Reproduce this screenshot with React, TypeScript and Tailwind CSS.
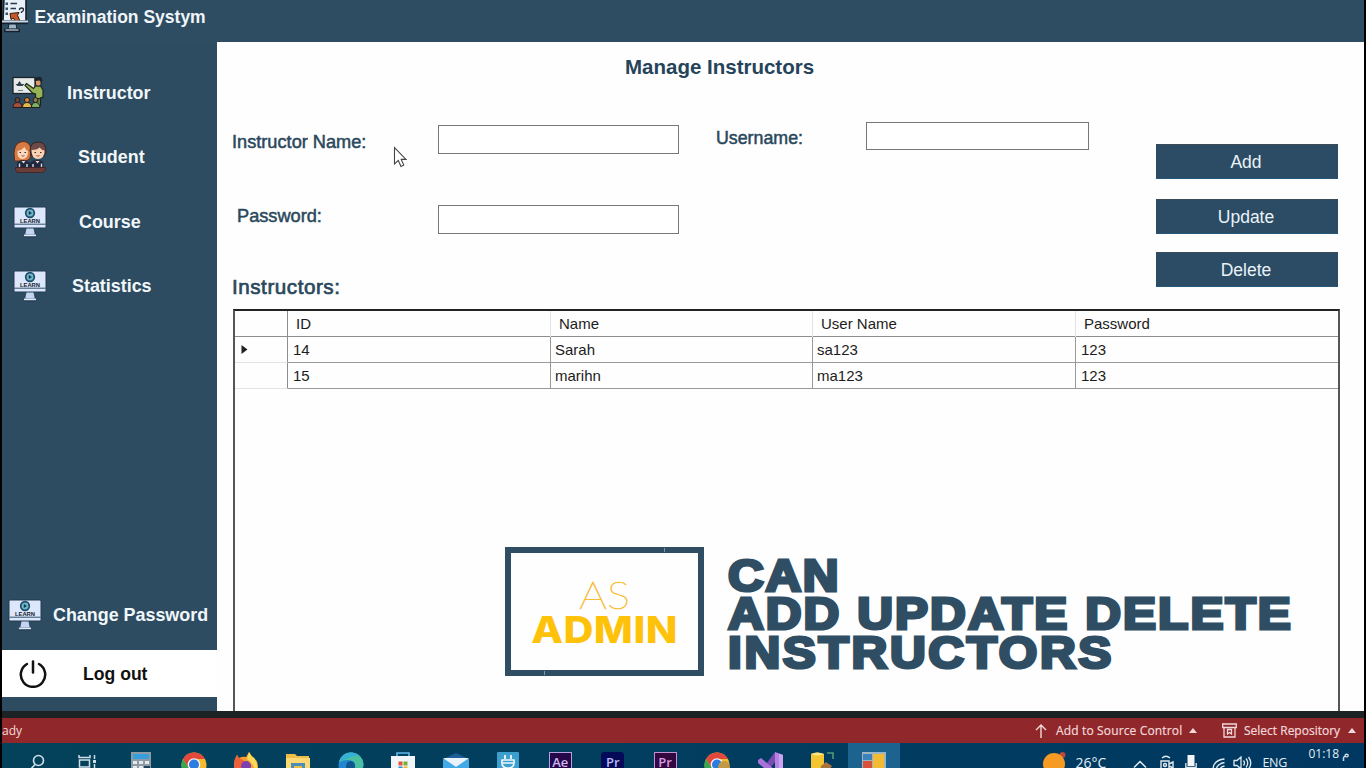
import React from "react";

function ExamIcon() {
  return (
    <svg width="26" height="34" viewBox="0 0 26 34" className="block">
      <path d="M2 0H24V22H1Z" fill="#e9f1f8" stroke="#15212c" strokeWidth="1.6" />
      <path d="M3.500 3.500h2.500v2.500H3.500ZM3.500 8.500h2.500v2.500H3.500ZM3.500 13.500h2.500v2.500H3.500Z" fill="#3b5164" />
      <path d="M8.500 4.500H15M8.500 9.500H14" stroke="#27394a" strokeWidth="1.300" />
      <path d="M17.500 11q0-2 2-2t2 1.700q0 1.300-2 2.300v1" stroke="#1c2935" strokeWidth="1.300" fill="none" />
      <path d="M8 14.500L17 13.500l-1.500 2.800 2.500 5.700h-5l-1.500-3-2.500 1.500Z" fill="#c4592c" stroke="#3a1a10" strokeWidth="1" />
      <path d="M0 22.500H26" stroke="#c8d8e6" strokeWidth="2" />
      <path d="M0 24.500H26" stroke="#15212c" strokeWidth="1.400" />
      <path d="M7 25h7l1 5H6Z" fill="#9fb6c8" stroke="#15212c" strokeWidth="1" />
      <path d="M2 31.500H18" stroke="#15212c" strokeWidth="3.400" />
      <path d="M3.500 31H16.500" stroke="#b9cbd9" strokeWidth="1.300" />
    </svg>
  );
}

function TeacherIcon() {
  return (
    <svg width="32" height="34" viewBox="0 0 32 34" className="block">
      <rect x="1" y="1.500" width="22" height="16" fill="#e6ebe9" stroke="#1c2429" strokeWidth="1.300" />
      <path d="M3.500 8h2l2-3 2 3h3l-2 2h-5Z" fill="#33414a" />
      <path d="M6 14.500h5" stroke="#6c7b82" strokeWidth="1" />
      <path d="M14.500 7.500l7 5 2-2.500h5l2.500 4v7l-2.500 1v7h-5v-11l-3-1-7.500-7.500Z" fill="#98b356" stroke="#1b2518" strokeWidth="1.200" />
      <rect x="23.500" y="3.500" width="5.500" height="6.500" rx="2" fill="#d99a69" stroke="#1c2429" strokeWidth="1" />
      <path d="M22.500 5V2.500Q25 0 29 1l1.500 3-1 3-1.500-2.500Z" fill="#1c2429" />
      <path d="M23.500 22.500h5v7h-5Z" fill="#5d7f4e" stroke="#1b2518" />
      <path d="M1 31.500q0-5 4.500-5t4.500 5Z" fill="#a6503b" stroke="#241c1a" />
      <circle cx="5.500" cy="24" r="2.500" fill="#614542" stroke="#231b1b" />
      <path d="M10.500 31.500q0-5 4.500-5t4.500 5Z" fill="#e3b94c" stroke="#241c1a" />
      <circle cx="15" cy="24" r="2.500" fill="#d6843c" stroke="#231b1b" />
      <path d="M19.500 31.500q0-5 4-5t4.500 5Z" fill="#7fae66" stroke="#241c1a" />
      <circle cx="23.500" cy="24" r="2.500" fill="#8e7b44" stroke="#231b1b" />
    </svg>
  );
}

function StudentsIcon() {
  return (
    <svg width="34" height="34" viewBox="0 0 34 34" className="block">
      <path d="M1.500 20Q-1 3 9 1.500q8-.5 9 8l-1 9q-3 3-6 2.500L2 21Z" fill="#d97a42" stroke="#5a2a1c" strokeWidth="1" />
      <path d="M17 11q0-9 8.500-9 8 0 7.500 11l-2 3H19Z" fill="#6e4a46" stroke="#35211f" strokeWidth="1" />
      <path d="M4.500 11q4-.5 7-4 1 3 3.500 4 0 8-5.500 8t-5-8Z" fill="#fbd9bd" />
      <path d="M18.500 10q6 0 8-2.500 2 2.500 5 3 0 8.500-6.500 8.500t-6.500-9Z" fill="#f9d2b4" />
      <path d="M6.500 12.500h1.500M11.500 12.500H13M21.500 12.500H23M27 12.500h1.500" stroke="#3a2522" strokeWidth="1.200" />
      <path d="M8.500 15.500q1.500 1.500 3 0M23.500 15.500q1.500 1.500 3 0" stroke="#b3473b" strokeWidth="1" fill="none" />
      <path d="M4 28v-5q2-3 6-3t7 3q2-3 7.500-3 6 0 6 4v4Z" fill="#20283e" />
      <path d="M6.500 23.500v3.500M14 24v3M20 24v3M28.500 23.500v3.500" stroke="#d3dcf1" strokeWidth="1.400" />
      <path d="M8.500 21l2 2.500 2-2.500M22.500 21l2 2.500 2-2.500" fill="#f4d6c3" />
      <path d="M2.500 27.500h30v2.500l-2 2.500H4l-1.500-2.500Z" fill="#6a3c38" stroke="#40211f" strokeWidth=".8" />
    </svg>
  );
}

function LearnIcon() {
  return (
    <svg width="34" height="32" viewBox="0 0 34 32" className="block">
      <rect x="1" y="1" width="32" height="21" rx="1.500" fill="#dce7fb" stroke="#243a50" strokeWidth="1" />
      <path d="M1.500 18.200H32.500" stroke="#33506b" strokeWidth="1" />
      <circle cx="17" cy="7" r="4.300" fill="#6eb4cc" stroke="#1d4c66" strokeWidth="1.700" />
      <path d="M15.800 5v4l3-2Z" fill="#143348" />
      <text x="17" y="17" textAnchor="middle" fontFamily="Liberation Sans" fontWeight="700" fontSize="5.800" fill="#16202c">LEARN</text>
      <path d="M13.500 22.500h7l1.200 6H12.300Z" fill="#c4d4f2" />
      <path d="M11 29.500H23" stroke="#e2ebfc" strokeWidth="1.800" />
      <path d="M11 31H23" stroke="#243a50" strokeWidth="1" />
    </svg>
  );
}

function NavItem({ icon, label, pad, gap }: { icon: React.ReactNode; label: string; pad: string; gap: string }) {
  return (
    <div className={`flex h-[64.3px] items-center ${pad}`}>
      <div className="w-[34px] shrink-0">{icon}</div>
      <span className={`text-[17.9px] leading-6 font-bold whitespace-nowrap text-[#f2f7fa] ${gap}`}>{label}</span>
    </div>
  );
}

const rows = [
  { id: "14", name: "Sarah", user: "sa123", pass: "123", current: true },
  { id: "15", name: "marihn", user: "ma123", pass: "123", current: false },
];

function ActionButton({ label, className }: { label: string; className: string }) {
  return (
    <button className={`block w-[182px] border-t border-b border-t-[#3c4b58] border-b-[#24557a] bg-[#2b4c64] pt-[2px] pr-[2px] text-center text-[17.5px] leading-none text-[#eaf2f7] ${className}`}>
      {label}
    </button>
  );
}

function Chrome() {
  return (
    <svg width="26" height="26" viewBox="0 0 26 26">
      <circle cx="13" cy="13" r="12.500" fill="#f4b92d" />
      <path d="M13 .5A12.500 12.500 0 0 1 24 7H13l-5.500 9L2 7A12.500 12.500 0 0 1 13 .5Z" fill="#e2483b" />
      <path d="M2 7l6 9.500 7 2-3 7A12.500 12.500 0 0 1 2 7Z" fill="#36a853" />
      <circle cx="13" cy="12.500" r="6.300" fill="#f3f6fb" />
      <circle cx="13" cy="12.500" r="5" fill="#2c7de0" />
    </svg>
  );
}

function AdobeTile({ text, box }: { text: string; box: string }) {
  return (
    <div className={`flex h-[24px] w-[23px] justify-center border pt-[3px] text-[13px] leading-[13px] font-semibold ${box}`}>
      {text}
    </div>
  );
}

const apps: { key: string; icon: React.ReactNode }[] = [
  {
    key: "calculator",
    icon: (
      <svg width="20" height="26" viewBox="0 0 20 26">
        <path d="M0 0h20v26H0Z" fill="#8e9ba5" />
        <path d="M2 2h16v5H2Z" fill="#35a0dd" />
        <path d="M2 9h4v3H2ZM8 9h4v3H8ZM14 9h4v3h-4ZM2 14h4v3H2ZM8 14h4v3H8Z" fill="#e3e9ed" />
        <path d="M13 14h6v10h-6Z" fill="#1f405a" />
      </svg>
    ),
  },
  { key: "chrome", icon: <Chrome /> },
  {
    key: "firefox",
    icon: (
      <svg width="26" height="26" viewBox="0 0 26 26">
        <path d="M1 14Q1 7 4 3l2 3q4-2 7-1l3-5q2 4 5 6 4 3 4 9 0 11-12 11T1 14Z" fill="#f5a02d" />
        <path d="M1 14Q1 7 4 3l2 3q4 1 7 5H9l-1 4 6 9Q1 26 1 14Z" fill="#ee6038" />
        <circle cx="13" cy="14" r="5" fill="#7b3fb0" />
        <path d="M16 0q2 4 5 6 5 6 2 14-3-9-9-13Z" fill="#fbd95c" />
      </svg>
    ),
  },
  {
    key: "files",
    icon: (
      <svg width="24" height="24" viewBox="0 0 24 24">
        <path d="M0 2h9l2 2h12v20H0Z" fill="#edbd48" />
        <path d="M0 6h24v18H0Z" fill="#fbd974" />
        <path d="M5 11h14v13H5Z" fill="#4b8fb8" />
        <path d="M8 14h8v10H8Z" fill="#edbd48" />
      </svg>
    ),
  },
  {
    key: "edge",
    icon: (
      <svg width="26" height="26" viewBox="0 0 26 26">
        <circle cx="13" cy="13" r="12.500" fill="#2386d1" />
        <path d="M1 10Q4 0 14 .5 25 2 25.500 13q-1 6-9 5 3-9-6-10-6 0-9.500 2Z" fill="#49c0a0" />
        <path d="M1 10Q4 0 14 .5q5 .5 8 4-6-2-12 2-6 1-9 3.500Z" fill="#35b0d6" />
        <path d="M8 15q0-6 5-6 4 1 4 5-1 5 5 5l-3 6Q8 25 8 15Z" fill="#10568f" />
      </svg>
    ),
  },
  {
    key: "store",
    icon: (
      <svg width="26" height="25" viewBox="0 0 26 25">
        <path d="M7 5V1h12v4" fill="none" stroke="#5fb7ea" strokeWidth="1.600" />
        <path d="M1 4h24v21H1Z" fill="#f0f5f9" />
        <path d="M8.500 9.500h4v4h-4Z" fill="#e05438" />
        <path d="M13.500 9.500h4v4h-4Z" fill="#77ad38" />
        <path d="M8.500 14.500h4v4h-4Z" fill="#2c8fd3" />
        <path d="M13.500 14.500h4v4h-4Z" fill="#efb52e" />
      </svg>
    ),
  },
  {
    key: "mail",
    icon: (
      <svg width="26" height="24" viewBox="0 0 26 24">
        <path d="M0 7l13-6 13 6Z" fill="#1c5f9a" />
        <path d="M0 7h26v17H0Z" fill="#42a8e6" />
        <path d="M0 6h26l-13 9Z" fill="#eaf3fa" />
      </svg>
    ),
  },
  {
    key: "plug",
    icon: (
      <svg width="22" height="24" viewBox="0 0 22 24">
        <rect width="22" height="24" rx="1" fill="#3d9fce" />
        <path d="M8 3v4M14 3v4" stroke="#eef7fb" strokeWidth="1.800" />
        <path d="M5 8h12v3q0 5-6 5t-6-5Z" fill="none" stroke="#eef7fb" strokeWidth="1.700" />
        <path d="M11 16v6M6 11h10" stroke="#eef7fb" strokeWidth="1.600" />
      </svg>
    ),
  },
  { key: "ae", icon: <AdobeTile text="Ae" box="border-[#b3a2dc] bg-[#26074a] text-[#cdb8f0]" /> },
  { key: "pr-blue", icon: <AdobeTile text="Pr" box="rounded-[3px] border-[#040a57] bg-[#040a57] text-[#b9b6fa]" /> },
  { key: "pr-plum", icon: <AdobeTile text="Pr" box="border-[#c58fd3] bg-[#33083f] text-[#d79be2]" /> },
  {
    key: "chrome-profile",
    icon: (
      <div className="relative">
        <Chrome />
        <svg className="absolute top-[8px] left-[14px]" width="12" height="12" viewBox="0 0 12 12">
          <path d="M0 7q1-6 6-6t6 6v5H2Z" fill="#c29a45" />
          <path d="M5 8h7v4H5Z" fill="#41597a" />
        </svg>
      </div>
    ),
  },
  {
    key: "visual-studio",
    icon: (
      <svg width="26" height="25" viewBox="0 0 26 25">
        <path d="M18 0v10L6 25H0l1-2Z" fill="#7c4cb4" />
        <path d="M1 8l3-2 14 12v7L1 11Z" fill="#a972db" />
        <path d="M18 0l8 3v22h-8Z" fill="#b583e2" />
        <path d="M22 1.500l4 1.500v22h-4Z" fill="#cda3f0" />
      </svg>
    ),
  },
  {
    key: "sql",
    icon: (
      <svg width="24" height="24" viewBox="0 0 24 24">
        <path d="M1 2q6-3 13 0v15H1Z" fill="#f2c531" />
        <path d="M1 2q6-3 13 0-6 3-13 0" fill="#fbe58a" />
        <path d="M17 1h6v6" fill="none" stroke="#4f9c74" strokeWidth="1.600" />
        <path d="M11 14l5-4 6 4-4 6-8-1Z" fill="#a7753b" />
      </svg>
    ),
  },
];

function FormLabel({ text, className }: { text: string; className: string }) {
  return <div className={`leading-5 whitespace-nowrap text-[#2a485c] ${className}`}>{text}</div>;
}

export default function App() {
  return (
    <div className="flex h-[768px] w-[1366px] flex-col overflow-hidden bg-black px-[2px] font-['Liberation_Sans',Arial,sans-serif]">
      <header className="flex h-[42px] shrink-0 bg-[#2e4c62]">
        <div className="-mt-[1px] w-[26px]">
          <ExamIcon />
        </div>
        <h1 className="mt-[5px] ml-[6.500px] text-[17.5px] leading-6 font-bold text-[#eff5f9]">Examination Systym</h1>
      </header>

      <div className="flex h-[669px] shrink-0">
        <aside className="flex w-[215px] shrink-0 flex-col bg-[#2d4c62] pt-[19px]">
          <NavItem icon={<TeacherIcon />} label="Instructor" pad="pl-[10px]" gap="ml-[21px]" />
          <NavItem icon={<StudentsIcon />} label="Student" pad="pl-[11px]" gap="ml-[31px]" />
          <NavItem icon={<LearnIcon />} label="Course" pad="pl-[11px]" gap="ml-[32px]" />
          <NavItem icon={<LearnIcon />} label="Statistics" pad="pl-[11px]" gap="ml-[25px]" />
          <div className="mt-auto">
            <NavItem icon={<LearnIcon />} label="Change Password" pad="pl-[6px]" gap="ml-[11px]" />
          </div>
          <div className="mt-[3px] mb-[14px] flex h-[47px] shrink-0 items-center bg-white pl-[17px]">
            <svg width="28" height="28" viewBox="0 0 28 28" fill="none" stroke="#111" strokeWidth="2.500" strokeLinecap="round">
              <path d="M14 1.500V12.500" />
              <path d="M8 4A12.200 12.200 0 1 0 20 4" />
            </svg>
            <span className="ml-[36px] text-[17.6px] leading-6 font-bold text-[#111]">Log out</span>
          </div>
        </aside>

        <main className="relative flex w-[1147px] flex-col overflow-hidden bg-[#fefefe]">
          <h2 className="mt-[13px] pl-[408px] text-[20.5px] leading-6 font-bold text-[#25445a]">Manage Instructors</h2>

          <section className="flex h-[230px] shrink-0 pl-[15px]">
            <div className="w-[206px] pt-[53px]">
              <FormLabel text="Instructor Name:" className="text-[18.2px] [-webkit-text-stroke:0.5px]" />
              <FormLabel text="Password:" className="mt-[54px] pl-[5px] text-[18.2px] [-webkit-text-stroke:0.5px]" />
              <FormLabel text="Instructors:" className="mt-[51px] text-[20.6px] tracking-[0.55px] [-webkit-text-stroke:0.7px]" />
            </div>
            <div className="w-[241px] pt-[46px]">
              <input className="block h-[29px] w-[241px] rounded-none border border-[#777] bg-white" />
              <input className="mt-[51px] block h-[29px] w-[241px] rounded-none border border-[#777] bg-white" />
            </div>
            <div className="w-[187px] pt-[49px] pl-[37px]">
              <FormLabel text="Username:" className="text-[17.8px] [-webkit-text-stroke:0.5px]" />
            </div>
            <div className="w-[223px] pt-[43px]">
              <input className="block h-[28px] w-[223px] rounded-none border border-[#777] bg-white" />
            </div>
            <div className="pt-[65px] pl-[67px]">
              <ActionButton label="Add" className="h-[35px]" />
              <ActionButton label="Update" className="mt-[20px] h-[35px]" />
              <ActionButton label="Delete" className="mt-[18px] h-[35px]" />
            </div>
          </section>

          <section className="ml-[16px] h-[420px] w-[1107px] shrink-0 border-t-2 border-r-2 border-l-2 border-t-[#222] border-r-[#555] border-l-[#555] text-[15px] text-[#1c1c1c]">
            <div className="grid h-[26px] grid-cols-[53px_263px_262px_263px_1fr] items-stretch border-b border-[#8d8d8d] leading-[26px]">
              <div className="border-r border-[#8d8d8d]" />
              <div className="border-r border-[#e4e4e4] pl-[8px]">ID</div>
              <div className="border-r border-[#e4e4e4] pl-[8px]">Name</div>
              <div className="border-r border-[#e4e4e4] pl-[8px]">User Name</div>
              <div className="pl-[8px]">Password</div>
            </div>
            {rows.map((r) => (
              <div key={r.id} className="grid h-[25.500px] grid-cols-[53px_263px_262px_263px_1fr] leading-[25px]">
                <div className="flex items-center border-r border-b border-r-[#8d8d8d] border-b-[#e4e4e4] pl-[6px]">
                  {r.current && (
                    <svg width="7" height="9" viewBox="0 0 7 9">
                      <path d="M.5 0L6.500 4.500.5 9Z" fill="#222" />
                    </svg>
                  )}
                </div>
                <div className="border-r border-b border-[#999] pl-[5px]">{r.id}</div>
                <div className="border-r border-b border-[#999] pl-[4px]">{r.name}</div>
                <div className="border-r border-b border-[#999] pl-[4px]">{r.user}</div>
                <div className="border-b border-[#999] pl-[5px]">{r.pass}</div>
              </div>
            ))}
          </section>

          <svg className="absolute top-[104px] left-[176px]" width="14" height="22" viewBox="0 0 14 22">
            <path d="M1.500 1.500V18l3.800-3.600 2.700 6 2.800-1.300-2.600-5.700h4.800Z" fill="#fff" stroke="#444" strokeWidth="1.100" />
          </svg>

          <div className="absolute top-[505px] left-[288px] flex">
            <div className="relative flex h-[129px] w-[199px] shrink-0 flex-col items-center border-[6px] border-[#2f4e64] pt-[25px] text-[#ffc20a]">
              <span className="absolute -top-[5px] left-[153px] h-[4px] w-px bg-[#8396a4]" />
              <span className="absolute -bottom-[5px] left-[33px] h-[4px] w-px bg-[#8396a4]" />
              <div className="scale-x-[1.17] font-[Lato] text-[37px] leading-[34px] font-extralight text-[#f8bd35] [-webkit-text-stroke:0.6px_#f8bd35]">AS</div>
              <div className="scale-x-[1.12] font-[Inter] text-[37px] leading-[35px] font-extrabold tracking-[0.4px] whitespace-nowrap">ADMIN</div>
            </div>
            <div className="ml-[23.500px] origin-left scale-x-[1.125] pt-[9.500px] text-[44px] leading-[38.700px] font-bold whitespace-nowrap text-[#2f4e64] [-webkit-text-stroke:3.1px_#2f4e64]">
              <div className="tracking-[1.500px]">CAN</div>
              <div className="tracking-[1.830px]">ADD UPDATE DELETE</div>
              <div className="tracking-[2.380px]">INSTRUCTORS</div>
            </div>
          </div>
        </main>
      </div>

      <div className="h-[7px] shrink-0 bg-[#1d2324]" />

      <div className="flex h-[25px] shrink-0 items-center bg-[#8f272b] font-['Open_Sans',sans-serif] text-[12px] leading-4 font-medium text-[#f3d9da]">
        <span className="w-[21px]">ady</span>
        <svg className="ml-[1012px]" width="12" height="14" viewBox="0 0 12 14" fill="none" stroke="#f3d9da" strokeWidth="1.400">
          <path d="M6 14V1M1 6l5-5 5 5" />
        </svg>
        <span className="ml-[9px] w-[127px] tracking-[0.15px] whitespace-nowrap [-webkit-text-stroke:0.2px]">Add to Source Control</span>
        <svg className="ml-[6px]" width="8" height="5" viewBox="0 0 8 5">
          <path d="M0 5L4 0l4 5Z" fill="#f3d9da" />
        </svg>
        <svg className="ml-[25px]" width="15" height="15" viewBox="0 0 15 15" fill="none" stroke="#f3d9da" strokeWidth="1.300">
          <path d="M.7 1h13.600v3.500H.7ZM2 4.500v9.500h11V4.500M5.500 6.500v4.500L7.500 9.500l2 1.500V6.500Z" />
        </svg>
        <span className="ml-[7px] w-[97px] whitespace-nowrap [-webkit-text-stroke:0.2px]">Select Repository</span>
        <svg className="ml-[7px]" width="8" height="5" viewBox="0 0 8 5">
          <path d="M0 5L4 0l4 5Z" fill="#f3d9da" />
        </svg>
      </div>

      <footer className="flex h-[25px] shrink-0 items-start overflow-hidden bg-linear-to-r from-[#04425b] to-[#003862] font-['Open_Sans',sans-serif] text-[#e3edf3]">
        <div className="ml-[10px] flex w-[50px] shrink-0 justify-center pt-[11px]">
          <svg width="16" height="18" viewBox="0 0 16 18" fill="none" stroke="#cfdfe8" strokeWidth="1.600">
            <circle cx="9.500" cy="6.500" r="5" />
            <path d="M6 10.500L0 17" />
          </svg>
        </div>
        <div className="flex w-[50px] shrink-0 justify-center pt-[12px]">
          <svg width="19" height="18" viewBox="0 0 19 18" fill="none" stroke="#cfdfe8" strokeWidth="1.500">
            <path d="M1 0v2.500h11V0M1.500 5h10v7h-10ZM1 17v-3h11v3M16.500 0v4M16.500 9v8" />
            <path d="M15 5h3v3h-3Z" fill="#cfdfe8" stroke="none" />
          </svg>
        </div>
        <div className="ml-[3px] flex shrink-0">
          {apps.map((a) => (
            <div key={a.key} className="flex w-[52.400px] justify-center pt-[9px]">
              {a.icon}
            </div>
          ))}
          <div className="flex w-[52px] justify-center bg-[#1c6390] pt-[9px]">
            <svg width="24" height="24" viewBox="0 0 24 24">
              <path d="M0 0h24v24H0Z" fill="#9db5c4" />
              <path d="M1 2h9v6H1Z" fill="#3c82ba" />
              <path d="M1 9h9v15H1Z" fill="#d8523b" />
              <path d="M11 2h11v17H11Z" fill="#f3bb34" />
            </svg>
          </div>
        </div>
        <div className="ml-[142px] w-[26px] shrink-0 pt-[8px]">
          <svg width="26" height="26" viewBox="0 0 26 26">
            <circle cx="20.500" cy="4" r="3" fill="#b8493c" />
            <circle cx="12" cy="13" r="11" fill="#f59a23" />
          </svg>
        </div>
        <span className="ml-[7px] w-[33px] shrink-0 pt-[10px] text-[14px] leading-5 font-medium">26°C</span>
        <svg className="mt-[17px] ml-[25px] shrink-0" width="14" height="8" viewBox="0 0 14 8" fill="none" stroke="#dfe9ef" strokeWidth="1.500">
          <path d="M1 7.500l6-6 6 6" />
        </svg>
        <svg className="mt-[12px] ml-[13px] shrink-0" width="14" height="16" viewBox="0 0 14 16" fill="none" stroke="#dfe9ef" strokeWidth="1.400">
          <path d="M2 3q4-3.500 8 0M1 6h8v8H1ZM9 9l4-2v6l-4-2" />
          <circle cx="5" cy="10" r="1.500" />
        </svg>
        <svg className="mt-[12px] ml-[11px] shrink-0" width="12" height="16" viewBox="0 0 12 16">
          <path d="M2.500 0h7v11h-7Z" fill="#f2f6f8" />
          <path d="M.8 8v4.500h10.400V8" fill="none" stroke="#dfe9ef" strokeWidth="1.300" />
        </svg>
        <svg className="mt-[15px] ml-[15px] shrink-0" width="13" height="13" viewBox="0 0 13 13" fill="none" stroke="#dfe9ef" strokeWidth="1.300">
          <path d="M1 12Q1 2 12.500 1M4 13Q4 6 12.500 4.500M7.500 13Q7.500 9 12.500 8" />
        </svg>
        <svg className="mt-[13px] ml-[8px] shrink-0" width="19" height="14" viewBox="0 0 19 14" fill="none" stroke="#dfe9ef" strokeWidth="1.300">
          <path d="M1 4.500h3l4-3.500v12L4 9.500H1ZM10.500 4.500q2 2.500 0 5M13 2.500q3.500 4.500 0 9M15.500 1q4.500 6 0 12" />
        </svg>
        <span className="ml-[10px] w-[26px] shrink-0 pt-[10px] text-[12.500px] leading-5 font-medium tracking-[-0.3px]">ENG</span>
        <span className="ml-[20px] shrink-0 pt-[2px] text-[12px] leading-[18px] font-medium tracking-[-0.4px] whitespace-nowrap">01:18 م</span>
      </footer>
    </div>
  );
}
